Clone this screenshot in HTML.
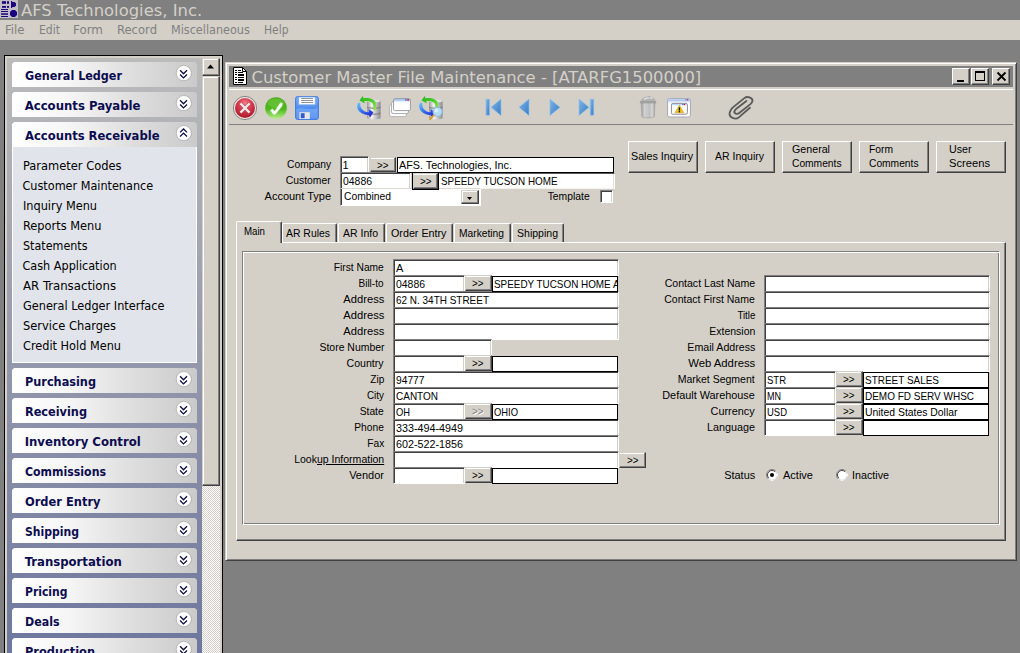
<!DOCTYPE html>
<html><head><meta charset="utf-8"><title>AFS Technologies, Inc.</title>
<style>
html,body{margin:0;padding:0}
body{width:1020px;height:653px;overflow:hidden;background:#808080;position:relative;font-family:"Liberation Sans",sans-serif;font-size:11px;color:#000}
.a{position:absolute;box-sizing:border-box}
.t{position:absolute;white-space:pre;z-index:2}
.sk{position:absolute;box-sizing:border-box;background:#fff;border:1px solid;border-color:#808080 #fff #fff #808080;box-shadow:inset 1px 1px 0 #404040,inset -1px 0 0 #d4d0c8}
.fl{position:absolute;z-index:1;box-sizing:border-box;background:#fff;border:1px solid #000}
.bt{position:absolute;box-sizing:border-box;background:#d4d0c8;border:1px solid;border-color:#fff #404040 #404040 #fff;box-shadow:inset -1px -1px 0 #808080}
.hd{position:absolute;box-sizing:border-box;left:12px;width:185px;height:25px;clip-path:polygon(2px 0,183px 0,185px 2px,185px 25px,0 25px,0 2px);background:linear-gradient(90deg,#ffffff 0%,#f6f6f6 30%,#dedede 65%,#cacaca 100%)}
.ch{position:absolute;left:164px;top:3px;width:16px;height:16px}
svg{position:absolute;overflow:visible}
</style></head><body>
<div class="a" style="left:0px;top:0px;width:1020px;height:20px;background:#808080"></div>
<svg style="left:0;top:0" width="18" height="18" viewBox="0 0 18 18"><rect x="0" y="0" width="18" height="18" fill="#c0c0c4"/>
<g fill="#1c0080"><rect x="2" y="1.2" width="4" height="2.6"/><rect x="7" y="1.2" width="2" height="2.6"/><rect x="2" y="6" width="4" height="1.8"/><rect x="7" y="6" width="2" height="1.8"/><rect x="1" y="9" width="7" height="1"/><rect x="1" y="11" width="7" height="1"/><rect x="1" y="13.3" width="7" height="1.5"/><rect x="1" y="16" width="7" height="1"/><path d="M11 1 h1.2 v1 h2.3 l1.5 1.2 v2.6 l-1.5 1.2 h-2.3 v1 h-1.2z"/><path d="M12 10 h3 l2 2 v3 l-2 2 h-3 l-2 -2 v-3z"/></g></svg>
<span class="t" style="top:1.00px;line-height:20px;font-family:'DejaVu Sans',sans-serif;font-size:16.4px;color:#d4d0c8;left:21px;">AFS Technologies, Inc.</span>
<div class="a" style="left:0px;top:20px;width:1020px;height:20px;background:#d4d0c8"></div>
<span class="t" style="top:22.00px;line-height:16px;font-family:'DejaVu Sans Condensed','DejaVu Sans',sans-serif;font-size:12.5px;color:#808080;left:4.5px;transform:scaleX(1.0409);transform-origin:0 0;">File</span>
<span class="t" style="top:22.00px;line-height:16px;font-family:'DejaVu Sans Condensed','DejaVu Sans',sans-serif;font-size:12.5px;color:#808080;left:38.5px;transform:scaleX(0.9641);transform-origin:0 0;">Edit</span>
<span class="t" style="top:22.00px;line-height:16px;font-family:'DejaVu Sans Condensed','DejaVu Sans',sans-serif;font-size:12.5px;color:#808080;left:73px;transform:scaleX(1.0614);transform-origin:0 0;">Form</span>
<span class="t" style="top:22.00px;line-height:16px;font-family:'DejaVu Sans Condensed','DejaVu Sans',sans-serif;font-size:12.5px;color:#808080;left:117px;transform:scaleX(1.0314);transform-origin:0 0;">Record</span>
<span class="t" style="top:22.00px;line-height:16px;font-family:'DejaVu Sans Condensed','DejaVu Sans',sans-serif;font-size:12.5px;color:#808080;left:171px;">Miscellaneous</span>
<span class="t" style="top:22.00px;line-height:16px;font-family:'DejaVu Sans Condensed','DejaVu Sans',sans-serif;font-size:12.5px;color:#808080;left:264px;transform:scaleX(0.9549);transform-origin:0 0;">Help</span>
<div class="a" style="left:4px;top:55px;width:219px;height:600px;background:#000"></div>
<div class="a" style="left:5px;top:56px;width:217px;height:600px;background:#d4d0c8"></div>
<div class="a" style="left:7px;top:58px;width:195px;height:600px;background:linear-gradient(180deg,#bbbbbb 0%,#6d769d 100%)"></div>
<div class="hd" style="top:62px"><svg class="ch" viewBox="0 0 16 16"><circle cx="8.1" cy="8.5" r="7.6" fill="#9a9aa2" opacity=".45"/><circle cx="7.8" cy="8.1" r="7.6" fill="#fff" stroke="#a6a6aa" stroke-width=".7"/><path d="M4.1 5.3 L7.5 8.8 L11 5.3 M4.1 9.5 L7.5 12.9 L11 9.5" fill="none" stroke="#0c0c44" stroke-width="1.3"/></svg></div>
<span class="t" style="top:67.00px;line-height:17px;font-family:'DejaVu Sans Condensed','DejaVu Sans',sans-serif;font-size:13px;font-weight:700;color:#0c0c50;left:24.7px;transform:scaleX(0.9568);transform-origin:0 0;">General Ledger</span>
<div class="hd" style="top:92px"><svg class="ch" viewBox="0 0 16 16"><circle cx="8.1" cy="8.5" r="7.6" fill="#9a9aa2" opacity=".45"/><circle cx="7.8" cy="8.1" r="7.6" fill="#fff" stroke="#a6a6aa" stroke-width=".7"/><path d="M4.1 5.3 L7.5 8.8 L11 5.3 M4.1 9.5 L7.5 12.9 L11 9.5" fill="none" stroke="#0c0c44" stroke-width="1.3"/></svg></div>
<span class="t" style="top:97.00px;line-height:17px;font-family:'DejaVu Sans Condensed','DejaVu Sans',sans-serif;font-size:13px;font-weight:700;color:#0c0c50;left:24.7px;">Accounts Payable</span>
<div class="hd" style="top:122px"><svg class="ch" viewBox="0 0 16 16"><circle cx="8.1" cy="8.5" r="7.6" fill="#9a9aa2" opacity=".45"/><circle cx="7.8" cy="8.1" r="7.6" fill="#fff" stroke="#a6a6aa" stroke-width=".7"/><path d="M4.1 7.4 L7.5 4 L11 7.4 M4.1 11.5 L7.5 8.1 L11 11.5" fill="none" stroke="#0c0c44" stroke-width="1.3"/></svg></div>
<span class="t" style="top:127.00px;line-height:17px;font-family:'DejaVu Sans Condensed','DejaVu Sans',sans-serif;font-size:13px;font-weight:700;color:#0c0c50;left:24.7px;transform:scaleX(0.9899);transform-origin:0 0;">Accounts Receivable</span>
<div class="hd" style="top:368px"><svg class="ch" viewBox="0 0 16 16"><circle cx="8.1" cy="8.5" r="7.6" fill="#9a9aa2" opacity=".45"/><circle cx="7.8" cy="8.1" r="7.6" fill="#fff" stroke="#a6a6aa" stroke-width=".7"/><path d="M4.1 5.3 L7.5 8.8 L11 5.3 M4.1 9.5 L7.5 12.9 L11 9.5" fill="none" stroke="#0c0c44" stroke-width="1.3"/></svg></div>
<span class="t" style="top:373.00px;line-height:17px;font-family:'DejaVu Sans Condensed','DejaVu Sans',sans-serif;font-size:13px;font-weight:700;color:#0c0c50;left:24.7px;transform:scaleX(0.9660);transform-origin:0 0;">Purchasing</span>
<div class="hd" style="top:398px"><svg class="ch" viewBox="0 0 16 16"><circle cx="8.1" cy="8.5" r="7.6" fill="#9a9aa2" opacity=".45"/><circle cx="7.8" cy="8.1" r="7.6" fill="#fff" stroke="#a6a6aa" stroke-width=".7"/><path d="M4.1 5.3 L7.5 8.8 L11 5.3 M4.1 9.5 L7.5 12.9 L11 9.5" fill="none" stroke="#0c0c44" stroke-width="1.3"/></svg></div>
<span class="t" style="top:403.00px;line-height:17px;font-family:'DejaVu Sans Condensed','DejaVu Sans',sans-serif;font-size:13px;font-weight:700;color:#0c0c50;left:24.7px;transform:scaleX(0.9664);transform-origin:0 0;">Receiving</span>
<div class="hd" style="top:428px"><svg class="ch" viewBox="0 0 16 16"><circle cx="8.1" cy="8.5" r="7.6" fill="#9a9aa2" opacity=".45"/><circle cx="7.8" cy="8.1" r="7.6" fill="#fff" stroke="#a6a6aa" stroke-width=".7"/><path d="M4.1 5.3 L7.5 8.8 L11 5.3 M4.1 9.5 L7.5 12.9 L11 9.5" fill="none" stroke="#0c0c44" stroke-width="1.3"/></svg></div>
<span class="t" style="top:433.00px;line-height:17px;font-family:'DejaVu Sans Condensed','DejaVu Sans',sans-serif;font-size:13px;font-weight:700;color:#0c0c50;left:24.7px;">Inventory Control</span>
<div class="hd" style="top:458px"><svg class="ch" viewBox="0 0 16 16"><circle cx="8.1" cy="8.5" r="7.6" fill="#9a9aa2" opacity=".45"/><circle cx="7.8" cy="8.1" r="7.6" fill="#fff" stroke="#a6a6aa" stroke-width=".7"/><path d="M4.1 5.3 L7.5 8.8 L11 5.3 M4.1 9.5 L7.5 12.9 L11 9.5" fill="none" stroke="#0c0c44" stroke-width="1.3"/></svg></div>
<span class="t" style="top:463.00px;line-height:17px;font-family:'DejaVu Sans Condensed','DejaVu Sans',sans-serif;font-size:13px;font-weight:700;color:#0c0c50;left:24.7px;transform:scaleX(0.9390);transform-origin:0 0;">Commissions</span>
<div class="hd" style="top:488px"><svg class="ch" viewBox="0 0 16 16"><circle cx="8.1" cy="8.5" r="7.6" fill="#9a9aa2" opacity=".45"/><circle cx="7.8" cy="8.1" r="7.6" fill="#fff" stroke="#a6a6aa" stroke-width=".7"/><path d="M4.1 5.3 L7.5 8.8 L11 5.3 M4.1 9.5 L7.5 12.9 L11 9.5" fill="none" stroke="#0c0c44" stroke-width="1.3"/></svg></div>
<span class="t" style="top:493.00px;line-height:17px;font-family:'DejaVu Sans Condensed','DejaVu Sans',sans-serif;font-size:13px;font-weight:700;color:#0c0c50;left:24.7px;transform:scaleX(0.9783);transform-origin:0 0;">Order Entry</span>
<div class="hd" style="top:518px"><svg class="ch" viewBox="0 0 16 16"><circle cx="8.1" cy="8.5" r="7.6" fill="#9a9aa2" opacity=".45"/><circle cx="7.8" cy="8.1" r="7.6" fill="#fff" stroke="#a6a6aa" stroke-width=".7"/><path d="M4.1 5.3 L7.5 8.8 L11 5.3 M4.1 9.5 L7.5 12.9 L11 9.5" fill="none" stroke="#0c0c44" stroke-width="1.3"/></svg></div>
<span class="t" style="top:523.00px;line-height:17px;font-family:'DejaVu Sans Condensed','DejaVu Sans',sans-serif;font-size:13px;font-weight:700;color:#0c0c50;left:24.7px;transform:scaleX(0.9275);transform-origin:0 0;">Shipping</span>
<div class="hd" style="top:548px"><svg class="ch" viewBox="0 0 16 16"><circle cx="8.1" cy="8.5" r="7.6" fill="#9a9aa2" opacity=".45"/><circle cx="7.8" cy="8.1" r="7.6" fill="#fff" stroke="#a6a6aa" stroke-width=".7"/><path d="M4.1 5.3 L7.5 8.8 L11 5.3 M4.1 9.5 L7.5 12.9 L11 9.5" fill="none" stroke="#0c0c44" stroke-width="1.3"/></svg></div>
<span class="t" style="top:553.00px;line-height:17px;font-family:'DejaVu Sans Condensed','DejaVu Sans',sans-serif;font-size:13px;font-weight:700;color:#0c0c50;left:24.7px;">Transportation</span>
<div class="hd" style="top:578px"><svg class="ch" viewBox="0 0 16 16"><circle cx="8.1" cy="8.5" r="7.6" fill="#9a9aa2" opacity=".45"/><circle cx="7.8" cy="8.1" r="7.6" fill="#fff" stroke="#a6a6aa" stroke-width=".7"/><path d="M4.1 5.3 L7.5 8.8 L11 5.3 M4.1 9.5 L7.5 12.9 L11 9.5" fill="none" stroke="#0c0c44" stroke-width="1.3"/></svg></div>
<span class="t" style="top:583.00px;line-height:17px;font-family:'DejaVu Sans Condensed','DejaVu Sans',sans-serif;font-size:13px;font-weight:700;color:#0c0c50;left:24.7px;transform:scaleX(0.9242);transform-origin:0 0;">Pricing</span>
<div class="hd" style="top:608px"><svg class="ch" viewBox="0 0 16 16"><circle cx="8.1" cy="8.5" r="7.6" fill="#9a9aa2" opacity=".45"/><circle cx="7.8" cy="8.1" r="7.6" fill="#fff" stroke="#a6a6aa" stroke-width=".7"/><path d="M4.1 5.3 L7.5 8.8 L11 5.3 M4.1 9.5 L7.5 12.9 L11 9.5" fill="none" stroke="#0c0c44" stroke-width="1.3"/></svg></div>
<span class="t" style="top:613.00px;line-height:17px;font-family:'DejaVu Sans Condensed','DejaVu Sans',sans-serif;font-size:13px;font-weight:700;color:#0c0c50;left:24.7px;transform:scaleX(0.9448);transform-origin:0 0;">Deals</span>
<div class="hd" style="top:638px"><svg class="ch" viewBox="0 0 16 16"><circle cx="8.1" cy="8.5" r="7.6" fill="#9a9aa2" opacity=".45"/><circle cx="7.8" cy="8.1" r="7.6" fill="#fff" stroke="#a6a6aa" stroke-width=".7"/><path d="M4.1 5.3 L7.5 8.8 L11 5.3 M4.1 9.5 L7.5 12.9 L11 9.5" fill="none" stroke="#0c0c44" stroke-width="1.3"/></svg></div>
<span class="t" style="top:643.00px;line-height:17px;font-family:'DejaVu Sans Condensed','DejaVu Sans',sans-serif;font-size:13px;font-weight:700;color:#0c0c50;left:24.7px;transform:scaleX(0.9724);transform-origin:0 0;">Production</span>
<div class="a" style="left:12px;top:147px;width:185px;height:216px;background:#e1e4ea;border:1px solid #fff;border-top:none"></div>
<span class="t" style="top:158.00px;line-height:16px;font-family:'DejaVu Sans Condensed','DejaVu Sans',sans-serif;font-size:12.5px;left:22.5px;transform:scaleX(1.0187);transform-origin:0 0;">Parameter Codes</span>
<span class="t" style="top:178.00px;line-height:16px;font-family:'DejaVu Sans Condensed','DejaVu Sans',sans-serif;font-size:12.5px;left:22.5px;">Customer Maintenance</span>
<span class="t" style="top:198.00px;line-height:16px;font-family:'DejaVu Sans Condensed','DejaVu Sans',sans-serif;font-size:12.5px;left:22.5px;transform:scaleX(1.0057);transform-origin:0 0;">Inquiry Menu</span>
<span class="t" style="top:218.00px;line-height:16px;font-family:'DejaVu Sans Condensed','DejaVu Sans',sans-serif;font-size:12.5px;left:22.5px;transform:scaleX(1.0123);transform-origin:0 0;">Reports Menu</span>
<span class="t" style="top:238.00px;line-height:16px;font-family:'DejaVu Sans Condensed','DejaVu Sans',sans-serif;font-size:12.5px;left:22.5px;transform:scaleX(0.9916);transform-origin:0 0;">Statements</span>
<span class="t" style="top:258.00px;line-height:16px;font-family:'DejaVu Sans Condensed','DejaVu Sans',sans-serif;font-size:12.5px;left:22.5px;">Cash Application</span>
<span class="t" style="top:278.00px;line-height:16px;font-family:'DejaVu Sans Condensed','DejaVu Sans',sans-serif;font-size:12.5px;left:22.5px;transform:scaleX(1.0440);transform-origin:0 0;">AR Transactions</span>
<span class="t" style="top:298.00px;line-height:16px;font-family:'DejaVu Sans Condensed','DejaVu Sans',sans-serif;font-size:12.5px;left:22.5px;transform:scaleX(1.0063);transform-origin:0 0;">General Ledger Interface</span>
<span class="t" style="top:318.00px;line-height:16px;font-family:'DejaVu Sans Condensed','DejaVu Sans',sans-serif;font-size:12.5px;left:22.5px;transform:scaleX(1.0181);transform-origin:0 0;">Service Charges</span>
<span class="t" style="top:338.00px;line-height:16px;font-family:'DejaVu Sans Condensed','DejaVu Sans',sans-serif;font-size:12.5px;left:22.5px;transform:scaleX(1.0058);transform-origin:0 0;">Credit Hold Menu</span>
<div class="a" style="left:202px;top:58px;width:18px;height:600px;background-color:#d4d0c8;background-image:linear-gradient(45deg,#fff 25%,transparent 25%,transparent 75%,#fff 75%),linear-gradient(45deg,#fff 25%,transparent 25%,transparent 75%,#fff 75%);background-size:2px 2px;background-position:0 0,1px 1px"></div>
<div class="bt" style="left:202px;top:58px;width:18px;height:18px;border-color:#d4d0c8 #404040 #404040 #d4d0c8;box-shadow:inset -1px -1px 0 #808080,inset 1px 1px 0 #fff"><svg style="left:4px;top:5px" width="8" height="5" viewBox="0 0 8 5"><path d="M0 4.5 L3.5 0.5 L7 4.5z" fill="#000"/></svg></div>
<div class="bt" style="left:202px;top:76px;width:18px;height:410px;border-color:#d4d0c8 #404040 #404040 #d4d0c8;box-shadow:inset -1px -1px 0 #808080,inset 1px 1px 0 #fff"></div>
<div class="a" style="left:225px;top:62px;width:792px;height:499px;background:#d4d0c8;border:1px solid;border-color:#d4d0c8 #404040 #404040 #d4d0c8;box-shadow:inset 1px 1px 0 #fff,inset -1px -1px 0 #808080"></div>
<div class="a" style="left:229px;top:66px;width:784px;height:21px;background:#808080"></div>
<svg style="left:233px;top:67px" width="14" height="18" viewBox="0 0 14 18"><path d="M0.5 0.5 H9.5 L13.5 4.5 V17.5 H0.5z" fill="#fff" stroke="#000"/><path d="M9.5 0.5 V4.5 H13.5" fill="none" stroke="#000"/><g fill="#000"><rect x="2" y="3" width="2" height="1"/><rect x="5" y="3" width="3" height="1"/><rect x="2" y="5" width="2" height="1"/><rect x="5" y="5" width="5" height="1"/><rect x="2" y="7" width="2" height="1"/><rect x="5" y="7" width="6" height="2"/><rect x="2" y="10" width="2" height="1"/><rect x="5" y="10" width="6" height="1"/><rect x="2" y="12" width="2" height="1"/><rect x="5" y="12" width="6" height="2"/><rect x="2" y="15" width="2" height="1"/><rect x="5" y="15" width="5" height="1"/></g></svg>
<span class="t" style="top:68.00px;line-height:20px;font-family:'DejaVu Sans',sans-serif;font-size:16.4px;color:#d4d0c8;left:251.5px;">Customer Master File Maintenance - [ATARFG1500000]</span>
<div class="bt" style="left:952px;top:68px;width:18px;height:17px;"><div class="a" style="left:4px;top:11px;width:7px;height:2px;background:#000"></div></div>
<div class="bt" style="left:971px;top:68px;width:18px;height:17px;"><div class="a" style="left:3px;top:2px;width:10px;height:10px;border:1px solid #000;border-top-width:2px"></div></div>
<div class="bt" style="left:992px;top:68px;width:18px;height:17px;"><svg style="left:4px;top:3px" width="9" height="9" viewBox="0 0 9 9"><path d="M0.5 0.5 L8.5 8.5 M8.5 0.5 L0.5 8.5" stroke="#000" stroke-width="1.8"/></svg></div>
<div class="a" style="left:229px;top:89px;width:784px;height:1px;background:#fff"></div>
<div class="a" style="left:229px;top:124px;width:784px;height:1px;background:#808080"></div>
<svg style="left:0;top:0" width="0" height="0"><defs>
<radialGradient id="gr" cx="50%" cy="30%" r="75%"><stop offset="0" stop-color="#ee8890"/><stop offset=".45" stop-color="#d63a4c"/><stop offset="1" stop-color="#a81428"/></radialGradient>
<linearGradient id="gg" x1="0" y1="0" x2="0" y2="1"><stop offset="0" stop-color="#48aa18"/><stop offset=".55" stop-color="#4cb81a"/><stop offset="1" stop-color="#b8ec8c"/></linearGradient>
<linearGradient id="gb" x1="0" y1="0" x2="0" y2="1"><stop offset="0" stop-color="#7fb0f4"/><stop offset=".5" stop-color="#4f8fee"/><stop offset="1" stop-color="#2f6fe0"/></linearGradient>
<linearGradient id="gn" x1="0" y1="0" x2="1" y2="1"><stop offset="0" stop-color="#7db4e6"/><stop offset="1" stop-color="#3a7cc4"/></linearGradient>
<linearGradient id="gc" x1="0" y1="0" x2="1" y2="0"><stop offset="0" stop-color="#9a9a9a"/><stop offset=".35" stop-color="#f4f4f4"/><stop offset="1" stop-color="#8c8c8c"/></linearGradient>
<linearGradient id="gw" x1="0" y1="0" x2="0" y2="1"><stop offset="0" stop-color="#a8c8f0"/><stop offset="1" stop-color="#ffffff"/></linearGradient>
<linearGradient id="gt" x1="0" y1="0" x2="1" y2="0"><stop offset="0" stop-color="#a6a6a6"/><stop offset=".3" stop-color="#d0d0d0"/><stop offset=".55" stop-color="#bababa"/><stop offset=".8" stop-color="#d2d2d2"/><stop offset="1" stop-color="#a6a6a6"/></linearGradient>
<linearGradient id="ga1" x1="0" y1="0" x2="1" y2="1"><stop offset="0" stop-color="#22b41c"/><stop offset=".5" stop-color="#48cc28"/><stop offset="1" stop-color="#98e858"/></linearGradient>
<linearGradient id="ga2" x1="0" y1="0" x2="1" y2="1"><stop offset="0" stop-color="#68d0ff"/><stop offset=".45" stop-color="#3070f0"/><stop offset="1" stop-color="#2418c8"/></linearGradient>
</defs></svg>
<!-- cancel -->
<svg style="left:233px;top:96px" width="24" height="24" viewBox="0 0 24 24"><circle cx="12" cy="12" r="11.6" fill="#ebe8e4" stroke="#6c6c6c" stroke-width=".8"/><circle cx="12" cy="12" r="10" fill="url(#gr)"/><path d="M7.4 7.4 L16.6 16.6 M16.6 7.4 L7.4 16.6" stroke="#b82a3a" stroke-width="3.6"/><path d="M7.4 7.4 L16.6 16.6 M16.6 7.4 L7.4 16.6" stroke="#ece8e8" stroke-width="2.5"/></svg>
<!-- ok -->
<svg style="left:265px;top:97px" width="22" height="22" viewBox="0 0 22 22"><circle cx="11" cy="11" r="10.8" fill="url(#gg)"/><ellipse cx="11" cy="6.2" rx="8.2" ry="4.8" fill="#9ae070" opacity=".3"/><path d="M5.2 13.4 L7.4 11.8 L9.7 14.2 L15.4 5.8 L17.4 6.2 L17 9.2 L10.2 17.6 L8.6 17.6 Z" fill="#fff" stroke="#d4e8c8" stroke-width=".5"/></svg>
<!-- save -->
<svg style="left:295px;top:96px" width="24" height="24" viewBox="0 0 24 24"><rect x=".6" y=".6" width="22.8" height="22.8" rx="2" fill="url(#gb)" stroke="#3c7ae6" stroke-width="1"/><path d="M1.2 13 C7 10.5 16 15 22.8 12 V22 C22.8 22.6 22.4 22.8 22 22.8 H2 C1.6 22.8 1.2 22.6 1.2 22z" fill="#8cb8fa" opacity=".55"/><rect x="3.8" y="1" width="16.4" height="7.8" fill="#fff" stroke="#7aa4ea" stroke-width=".7"/><path d="M6.2 2.5 H18 M6.2 4.5 H18 M6.2 6.5 H18" stroke="#85858c" stroke-width=".9"/><rect x="4.4" y="16.2" width="10.4" height="6.8" fill="#e6e6e8"/><rect x="5.8" y="17.2" width="3.8" height="5" fill="#2c5cd0"/></svg>
<!-- db refresh -->
<svg style="left:357px;top:96px" width="24" height="24" viewBox="0 0 24 24"><g><path d="M10 5 C10 3.4 23.6 3.4 23.6 5 V22 C23.6 23.8 10 23.8 10 22z" fill="url(#gc)"/>
<ellipse cx="16.8" cy="5" rx="6.8" ry="1.5" fill="#e2e2e2"/>
<path d="M10 11 C10 12.6 23.6 12.6 23.6 11 M10 17 C10 18.6 23.6 18.6 23.6 17" fill="none" stroke="#6e6e6e" stroke-width=".9"/>
<path d="M2.6 4.6 L5.6 0.1 L6.6 2.4 C12 1 19.5 3.5 19.2 9 L18.6 14.5 L16.4 14 L16.4 9.5 C16.2 6.5 12 4.6 7.2 5.2 L7.8 7.4 Z" fill="url(#ga1)"/>
<path d="M1 6.4 C-0.5 9 -0.2 13 2.4 15.6 C5 18.2 8 19 11.6 18.9 L13.2 21.2 L16.4 16.3 L11.4 13.1 L11.8 16.2 C9 16.4 6 15.2 4.4 12.6 C3.2 10.6 3 9 3.4 7.3 Z" fill="url(#ga2)"/></g></svg>
<!-- windows -->
<svg style="left:389px;top:98px" width="23" height="20" viewBox="0 0 23 20"><rect x=".6" y="6.6" width="16.8" height="12" rx="1.6" fill="#fff" stroke="#b4b4b4" stroke-width="1"/><rect x="2.6" y="3.6" width="16.8" height="12" rx="1.6" fill="#fff" stroke="#a8a8a8" stroke-width="1"/><rect x="4.6" y=".6" width="16.8" height="12" rx="1.6" fill="url(#gw)" stroke="#9c9ca4" stroke-width="1"/><rect x="5.2" y="3.4" width="15.6" height="8.6" fill="#fff"/><rect x="16" y="1.2" width="1.8" height="1.4" fill="#3a78d8"/><rect x="18.2" y="1.2" width="1.8" height="1.4" fill="#e01020"/></svg>
<!-- db search -->
<svg style="left:419px;top:96px" width="24" height="24" viewBox="0 0 24 24"><g><path d="M10 5 C10 3.4 23.6 3.4 23.6 5 V22 C23.6 23.8 10 23.8 10 22z" fill="url(#gc)"/>
<ellipse cx="16.8" cy="5" rx="6.8" ry="1.5" fill="#e2e2e2"/>
<path d="M10 11 C10 12.6 23.6 12.6 23.6 11 M10 17 C10 18.6 23.6 18.6 23.6 17" fill="none" stroke="#6e6e6e" stroke-width=".9"/>
<path d="M2.6 4.6 L5.6 0.1 L6.6 2.4 C12 1 19.5 3.5 19.2 9 L18.6 14.5 L16.4 14 L16.4 9.5 C16.2 6.5 12 4.6 7.2 5.2 L7.8 7.4 Z" fill="url(#ga1)"/>
<path d="M1 6.4 C-0.5 9 -0.2 13 2.4 15.6 C5 18.2 8 19 11.6 18.9 L13.2 21.2 L16.4 16.3 L11.4 13.1 L11.8 16.2 C9 16.4 6 15.2 4.4 12.6 C3.2 10.6 3 9 3.4 7.3 Z" fill="url(#ga2)"/></g><path d="M11 23.4 L15.4 18.6" stroke="#e09a20" stroke-width="1.8" stroke-linecap="round"/><circle cx="18.6" cy="15.8" r="4.6" fill="#b4dcf8" stroke="#88b8e0" stroke-width="1"/><circle cx="17.4" cy="14.4" r="2" fill="#e4f4ff" opacity=".8"/></svg>
<!-- nav -->
<svg style="left:485px;top:98px" width="110" height="19" viewBox="0 0 110 19"><g fill="url(#gn)" stroke="#8cc0ee" stroke-width=".7">
<rect x="1" y="1.2" width="3.6" height="16"/><path d="M16 1 V17.6 L6 9.3z"/>
<path d="M44 1 V17.6 L34 9.3z"/>
<path d="M65 1 V17.6 L75 9.3z"/>
<path d="M94 1 V17.6 L104 9.3z"/><rect x="105.2" y="1.2" width="3.6" height="16"/></g></svg>
<!-- trash -->
<svg style="left:639px;top:95px" width="18" height="24" viewBox="0 0 18 24"><path d="M2.1 7 H16 L15.4 21.6 C15.3 23.3 2.9 23.3 2.8 21.6z" fill="url(#gt)" stroke="#949494" stroke-width=".5"/><path d="M5.6 9 V21.6 M9 9 V22 M12.4 9 V21.6" stroke="#d8d8d8" stroke-width="1" opacity=".7"/><path d="M1.8 6.8 C2.4 4 5 2.6 9.8 1.6 C14 2.4 16 4 16.4 6.6z" fill="#b4b4b4" stroke="#9c9c9c" stroke-width=".5"/><path d="M5 4.4 C7 3 11 2.4 13.6 3.4" stroke="#e8e8e8" stroke-width="1.2" fill="none"/><rect x="8.6" y=".9" width="2.6" height="1.5" rx=".6" fill="#b0b0b0"/><rect x="1.1" y="6.6" width="16" height="1.5" rx=".7" fill="#a8a8a8" stroke="#8c8c8c" stroke-width=".4"/></svg>
<!-- warning window -->
<svg style="left:667px;top:98px" width="24" height="20" viewBox="0 0 24 20"><rect x=".6" y=".6" width="22.8" height="18.4" rx="1.6" fill="#fff" stroke="#a4a8b4" stroke-width="1"/><rect x="1.2" y="1.2" width="21.6" height="2.4" fill="#b0c8ee"/><rect x="1.2" y="3.6" width="21.6" height="1" fill="#dce8f8"/><rect x="18.4" y="1.3" width="1.2" height="1" fill="#3a78d8"/><rect x="19.9" y="1.3" width="1.4" height="1.1" fill="#e80020"/><rect x="4.4" y="5.4" width="16" height="10.8" rx="1.4" fill="#fff" stroke="#8c8c94" stroke-width="1"/><rect x="5" y="6" width="14.8" height="1.3" fill="#c0d4f4"/><rect x="15.2" y="6" width="1.2" height="1" fill="#3a78d8"/><rect x="16.8" y="6" width="1.3" height="1.1" fill="#e80020"/><path d="M12.4 7.2 L16.9 14.8 H7.9z" fill="#f0c418" stroke="#c4980c" stroke-width=".5"/><path d="M12.4 9.4 V12.5" stroke="#000" stroke-width="1.4"/><rect x="11.7" y="13.1" width="1.4" height="1.2" fill="#000"/></svg>
<!-- paperclip -->
<svg style="left:729px;top:96px" width="24" height="24" viewBox="0 0 24 24"><path d="M20.9 11.7 L9.8 21.4 C6.2 24.4 -0.8 21.2 0.8 16.2 C1.4 14.2 2.2 13 3.6 11.6 L15.4 2.1 C18.6 -0.4 24.6 2 23.3 5.6 C23 6.6 22.4 7.2 21.4 8.1 L10.2 17 C7.6 19 4.4 17.2 5.7 14.6 C6 14 6.4 13.6 7 13.1 L17.4 4.9" fill="none" stroke="#5a5a5a" stroke-width="1.85" stroke-linecap="round" stroke-linejoin="round"/></svg>

<span class="t" style="top:157.00px;line-height:15px;right:689px;transform:scaleX(0.9346);transform-origin:100% 0;">Company</span>
<span class="t" style="top:173.00px;line-height:15px;right:689px;transform:scaleX(0.9436);transform-origin:100% 0;">Customer</span>
<span class="t" style="top:189.00px;line-height:15px;right:689px;">Account Type</span>
<div class="sk" style="left:340px;top:156px;width:29px;height:17px;"></div>
<span class="t" style="top:158.00px;line-height:15px;left:342.5px;">1</span>
<div class="bt" style="left:370px;top:157px;width:26px;height:15px;border-color:#d4d0c8 #404040 #404040 #d4d0c8;box-shadow:inset -1px -1px 0 #808080,inset 0 1px 0 #fff"></div>
<span class="t" style="top:158.50px;line-height:14px;font-size:10px;left:376.5px;transform:scaleX(0.9840);transform-origin:0 0;">&gt;&gt;</span>
<div class="fl" style="left:397px;top:157px;width:217px;height:16px;"></div>
<span class="t" style="top:158.00px;line-height:15px;left:399px;transform:scaleX(0.9794);transform-origin:0 0;">AFS. Technologies, Inc.</span>
<div class="sk" style="left:340px;top:172px;width:71px;height:17px;"></div>
<span class="t" style="top:174.00px;line-height:15px;left:342.5px;transform:scaleX(0.9479);transform-origin:0 0;">04886</span>
<div class="a" style="left:412px;top:172px;width:27px;height:18px;background:#000;z-index:1"></div>
<div class="bt" style="left:413px;top:173px;width:25px;height:16px;border-color:#d4d0c8 #404040 #404040 #d4d0c8;box-shadow:inset -1px -1px 0 #808080,inset 0 1px 0 #fff;z-index:1"></div>
<span class="t" style="top:174.50px;line-height:14px;font-size:10px;left:419.5px;transform:scaleX(0.9840);transform-origin:0 0;">&gt;&gt;</span>
<div class="a" style="left:439px;top:173px;width:176px;height:16px;background:#fff;border:1px solid;border-color:#585858 #fff #f4f2ee #fff;box-shadow:inset -1px 0 0 #e4e0d8"></div>
<span class="t" style="top:174.00px;line-height:15px;left:441px;transform:scaleX(0.8976);transform-origin:0 0;">SPEEDY TUCSON HOME</span>
<div class="a" style="left:340px;top:188px;width:141px;height:18px;background:#fff;border:1px solid;border-color:#dcd8d0 #fff #fff #808080;box-shadow:inset 1px 0 0 #404040"></div>
<span class="t" style="top:189.00px;line-height:15px;left:344px;transform:scaleX(0.9374);transform-origin:0 0;">Combined</span>
<div class="bt" style="left:461px;top:190px;width:18px;height:14px;border-color:#d4d0c8 #404040 #404040 #d4d0c8;box-shadow:inset -1px -1px 0 #808080,inset 1px 1px 0 #fff"><svg style="left:5px;top:6px" width="5" height="3" viewBox="0 0 5 3"><path d="M0 0 H5 L2.5 3z" fill="#000"/></svg></div>
<span class="t" style="top:189.00px;line-height:15px;right:430px;transform:scaleX(0.9408);transform-origin:100% 0;">Template</span>
<div class="sk" style="left:600px;top:190px;width:13px;height:13px;"></div>
<div class="bt" style="left:628px;top:141px;width:70px;height:32px;box-shadow:inset -1px -1px 0 #808080,inset 1px 1px 0 #d4d0c8"></div>
<span class="t" style="top:149.00px;line-height:15px;left:631px;transform:scaleX(0.9749);transform-origin:0 0;">Sales Inquiry</span>
<div class="bt" style="left:705px;top:141px;width:70px;height:32px;box-shadow:inset -1px -1px 0 #808080,inset 1px 1px 0 #d4d0c8"></div>
<span class="t" style="top:149.00px;line-height:15px;left:715px;transform:scaleX(0.9541);transform-origin:0 0;">AR Inquiry</span>
<div class="bt" style="left:782px;top:141px;width:70px;height:32px;box-shadow:inset -1px -1px 0 #808080,inset 1px 1px 0 #d4d0c8"></div>
<span class="t" style="top:142.00px;line-height:15px;left:791.5px;transform:scaleX(0.9709);transform-origin:0 0;">General</span>
<span class="t" style="top:156.00px;line-height:15px;left:791.5px;transform:scaleX(0.9307);transform-origin:0 0;">Comments</span>
<div class="bt" style="left:859px;top:141px;width:70px;height:32px;box-shadow:inset -1px -1px 0 #808080,inset 1px 1px 0 #d4d0c8"></div>
<span class="t" style="top:142.00px;line-height:15px;left:868.5px;transform:scaleX(0.9349);transform-origin:0 0;">Form</span>
<span class="t" style="top:156.00px;line-height:15px;left:868.5px;transform:scaleX(0.9307);transform-origin:0 0;">Comments</span>
<div class="bt" style="left:936px;top:141px;width:70px;height:32px;box-shadow:inset -1px -1px 0 #808080,inset 1px 1px 0 #d4d0c8"></div>
<span class="t" style="top:142.00px;line-height:15px;left:949px;transform:scaleX(0.9684);transform-origin:0 0;">User</span>
<span class="t" style="top:156.00px;line-height:15px;left:949px;transform:scaleX(1.0159);transform-origin:0 0;">Screens</span>
<div class="a" style="left:236px;top:242px;width:770px;height:299px;background:#d4d0c8;border:1px solid;border-color:#fff #404040 #404040 #fff;box-shadow:inset -1px -1px 0 #808080"></div>
<div class="a" style="left:282px;top:223px;width:55px;height:19px;background:#d4d0c8;border:1px solid;border-bottom:none;border-color:#fff #404040 #404040 #fff;border-radius:2px 2px 0 0;box-shadow:inset -1px 0 0 #808080"></div>
<span class="t" style="top:226.00px;line-height:15px;left:286px;transform:scaleX(0.9469);transform-origin:0 0;">AR Rules</span>
<div class="a" style="left:338px;top:223px;width:47px;height:19px;background:#d4d0c8;border:1px solid;border-bottom:none;border-color:#fff #404040 #404040 #fff;border-radius:2px 2px 0 0;box-shadow:inset -1px 0 0 #808080"></div>
<span class="t" style="top:226.00px;line-height:15px;left:343px;transform:scaleX(0.9540);transform-origin:0 0;">AR Info</span>
<div class="a" style="left:386px;top:223px;width:67px;height:19px;background:#d4d0c8;border:1px solid;border-bottom:none;border-color:#fff #404040 #404040 #fff;border-radius:2px 2px 0 0;box-shadow:inset -1px 0 0 #808080"></div>
<span class="t" style="top:226.00px;line-height:15px;left:390.5px;transform:scaleX(0.9761);transform-origin:0 0;">Order Entry</span>
<div class="a" style="left:454px;top:223px;width:57px;height:19px;background:#d4d0c8;border:1px solid;border-bottom:none;border-color:#fff #404040 #404040 #fff;border-radius:2px 2px 0 0;box-shadow:inset -1px 0 0 #808080"></div>
<span class="t" style="top:226.00px;line-height:15px;left:459px;transform:scaleX(0.9317);transform-origin:0 0;">Marketing</span>
<div class="a" style="left:512px;top:223px;width:52px;height:19px;background:#d4d0c8;border:1px solid;border-bottom:none;border-color:#fff #404040 #404040 #fff;border-radius:2px 2px 0 0;box-shadow:inset -1px 0 0 #808080"></div>
<span class="t" style="top:226.00px;line-height:15px;left:516.5px;transform:scaleX(0.9573);transform-origin:0 0;">Shipping</span>
<div class="a" style="left:236px;top:221px;width:46px;height:22px;background:#d4d0c8;border:1px solid;border-bottom:none;border-color:#fff #404040 #404040 #fff;border-radius:2px 2px 0 0;box-shadow:inset -1px 0 0 #808080"></div>
<span class="t" style="top:224.00px;line-height:15px;left:244px;transform:scaleX(0.8807);transform-origin:0 0;">Main</span>
<div class="a" style="left:242px;top:251px;width:758px;height:274px;border:1px solid;border-color:#808080 #fff #fff #808080;box-shadow:inset 1px 1px 0 #fff,inset -1px -1px 0 #808080"></div>
<span class="t" style="top:260.00px;line-height:15px;right:636px;transform:scaleX(0.9297);transform-origin:100% 0;">First Name</span>
<span class="t" style="top:276.00px;line-height:15px;right:636px;transform:scaleX(0.9086);transform-origin:100% 0;">Bill-to</span>
<span class="t" style="top:292.00px;line-height:15px;right:636px;transform:scaleX(1.0159);transform-origin:100% 0;">Address</span>
<span class="t" style="top:308.00px;line-height:15px;right:636px;transform:scaleX(1.0159);transform-origin:100% 0;">Address</span>
<span class="t" style="top:324.00px;line-height:15px;right:636px;transform:scaleX(1.0159);transform-origin:100% 0;">Address</span>
<span class="t" style="top:340.00px;line-height:15px;right:636px;transform:scaleX(0.9491);transform-origin:100% 0;">Store Number</span>
<span class="t" style="top:356.00px;line-height:15px;right:636px;transform:scaleX(0.9603);transform-origin:100% 0;">Country</span>
<span class="t" style="top:372.00px;line-height:15px;right:636px;transform:scaleX(0.9162);transform-origin:100% 0;">Zip</span>
<span class="t" style="top:388.00px;line-height:15px;right:636px;transform:scaleX(0.8969);transform-origin:100% 0;">City</span>
<span class="t" style="top:404.00px;line-height:15px;right:636px;transform:scaleX(0.9343);transform-origin:100% 0;">State</span>
<span class="t" style="top:420.00px;line-height:15px;right:636px;transform:scaleX(0.9273);transform-origin:100% 0;">Phone</span>
<span class="t" style="top:436.00px;line-height:15px;right:636px;transform:scaleX(0.9267);transform-origin:100% 0;">Fax</span>
<span class="t" style="top:452.00px;line-height:15px;right:636px;transform:scaleX(0.9557);transform-origin:100% 0;">Look<u>up Information</u></span>
<span class="t" style="top:468.00px;line-height:15px;right:636px;">Vendor</span>
<div class="sk" style="left:393px;top:259px;width:226px;height:17px;"></div>
<span class="t" style="top:261.00px;line-height:15px;left:396px;">A</span>
<div class="sk" style="left:393px;top:275px;width:72px;height:17px;"></div>
<span class="t" style="top:277.00px;line-height:15px;left:396px;transform:scaleX(0.9479);transform-origin:0 0;">04886</span>
<div class="bt" style="left:465px;top:275px;width:27px;height:16px;border-color:#d4d0c8 #404040 #404040 #d4d0c8;box-shadow:inset -1px -1px 0 #808080,inset 0 1px 0 #fff"></div>
<span class="t" style="top:276.50px;line-height:14px;font-size:10px;left:472px;transform:scaleX(0.9840);transform-origin:0 0;">&gt;&gt;</span>
<div class="fl" style="left:492px;top:276px;width:126px;height:16px;"></div>
<div class="sk" style="left:393px;top:291px;width:226px;height:17px;"></div>
<span class="t" style="top:293.00px;line-height:15px;left:396px;transform:scaleX(0.9055);transform-origin:0 0;">62 N. 34TH STREET</span>
<div class="sk" style="left:393px;top:307px;width:226px;height:17px;"></div>
<div class="sk" style="left:393px;top:323px;width:226px;height:17px;"></div>
<div class="sk" style="left:393px;top:339px;width:99px;height:17px;"></div>
<div class="sk" style="left:393px;top:355px;width:72px;height:17px;"></div>
<div class="bt" style="left:465px;top:355px;width:27px;height:16px;border-color:#d4d0c8 #404040 #404040 #d4d0c8;box-shadow:inset -1px -1px 0 #808080,inset 0 1px 0 #fff"></div>
<span class="t" style="top:356.50px;line-height:14px;font-size:10px;left:472px;transform:scaleX(0.9840);transform-origin:0 0;">&gt;&gt;</span>
<div class="fl" style="left:492px;top:356px;width:126px;height:16px;"></div>
<div class="sk" style="left:393px;top:371px;width:226px;height:17px;"></div>
<span class="t" style="top:373.00px;line-height:15px;left:396px;transform:scaleX(0.9316);transform-origin:0 0;">94777</span>
<div class="sk" style="left:393px;top:387px;width:226px;height:17px;"></div>
<span class="t" style="top:389.00px;line-height:15px;left:396px;transform:scaleX(0.9081);transform-origin:0 0;">CANTON</span>
<div class="sk" style="left:393px;top:403px;width:72px;height:17px;"></div>
<span class="t" style="top:405.00px;line-height:15px;left:396px;transform:scaleX(0.8485);transform-origin:0 0;">OH</span>
<div class="bt" style="left:465px;top:403px;width:27px;height:16px;border-color:#d4d0c8 #404040 #404040 #d4d0c8;box-shadow:inset -1px -1px 0 #808080,inset 0 1px 0 #fff"></div>
<span class="t" style="top:405.50px;line-height:14px;font-size:10px;color:#fff;left:473px;transform:scaleX(0.9840);transform-origin:0 0;">&gt;&gt;</span>
<span class="t" style="top:404.50px;line-height:14px;font-size:10px;color:#808080;left:472px;transform:scaleX(0.9840);transform-origin:0 0;">&gt;&gt;</span>
<div class="fl" style="left:492px;top:404px;width:126px;height:16px;"></div>
<span class="t" style="top:405.00px;line-height:15px;left:494px;transform:scaleX(0.8533);transform-origin:0 0;">OHIO</span>
<div class="sk" style="left:393px;top:419px;width:226px;height:17px;"></div>
<span class="t" style="top:421.00px;line-height:15px;left:396px;transform:scaleX(0.9779);transform-origin:0 0;">333-494-4949</span>
<div class="sk" style="left:393px;top:435px;width:226px;height:17px;"></div>
<span class="t" style="top:437.00px;line-height:15px;left:396px;transform:scaleX(0.9779);transform-origin:0 0;">602-522-1856</span>
<div class="sk" style="left:393px;top:451px;width:226px;height:17px;"></div>
<div class="bt" style="left:619px;top:452px;width:27px;height:16px;border-color:#d4d0c8 #404040 #404040 #d4d0c8;box-shadow:inset -1px -1px 0 #808080,inset 0 1px 0 #fff"></div>
<span class="t" style="top:453.50px;line-height:14px;font-size:10px;left:626.5px;transform:scaleX(0.9840);transform-origin:0 0;">&gt;&gt;</span>
<div class="sk" style="left:393px;top:467px;width:72px;height:17px;"></div>
<div class="bt" style="left:465px;top:467px;width:27px;height:16px;border-color:#d4d0c8 #404040 #404040 #d4d0c8;box-shadow:inset -1px -1px 0 #808080,inset 0 1px 0 #fff"></div>
<span class="t" style="top:468.50px;line-height:14px;font-size:10px;left:472px;transform:scaleX(0.9840);transform-origin:0 0;">&gt;&gt;</span>
<div class="fl" style="left:492px;top:468px;width:126px;height:16px;"></div>
<div class="a" style="left:493px;top:277px;width:124px;height:13px;overflow:hidden;z-index:2">
<span class="t" style="top:0.00px;line-height:15px;left:1px;transform:scaleX(0.8991);transform-origin:0 0;">SPEEDY TUCSON HOME A</span>
</div>
<span class="t" style="top:276.00px;line-height:15px;right:265px;transform:scaleX(0.9612);transform-origin:100% 0;">Contact Last Name</span>
<div class="sk" style="left:764px;top:275px;width:226px;height:17px;"></div>
<span class="t" style="top:292.00px;line-height:15px;right:265px;transform:scaleX(0.9551);transform-origin:100% 0;">Contact First Name</span>
<div class="sk" style="left:764px;top:291px;width:226px;height:17px;"></div>
<span class="t" style="top:308.00px;line-height:15px;right:265px;transform:scaleX(0.8834);transform-origin:100% 0;">Title</span>
<div class="sk" style="left:764px;top:307px;width:226px;height:17px;"></div>
<span class="t" style="top:324.00px;line-height:15px;right:265px;transform:scaleX(0.9521);transform-origin:100% 0;">Extension</span>
<div class="sk" style="left:764px;top:323px;width:226px;height:17px;"></div>
<span class="t" style="top:340.00px;line-height:15px;right:265px;transform:scaleX(0.9671);transform-origin:100% 0;">Email Address</span>
<div class="sk" style="left:764px;top:339px;width:226px;height:17px;"></div>
<span class="t" style="top:356.00px;line-height:15px;right:265px;transform:scaleX(1.0271);transform-origin:100% 0;">Web Address</span>
<div class="sk" style="left:764px;top:355px;width:226px;height:17px;"></div>
<span class="t" style="top:372.00px;line-height:15px;right:265px;transform:scaleX(0.9541);transform-origin:100% 0;">Market Segment</span>
<span class="t" style="top:388.00px;line-height:15px;right:265px;transform:scaleX(0.9865);transform-origin:100% 0;">Default Warehouse</span>
<span class="t" style="top:404.00px;line-height:15px;right:265px;transform:scaleX(0.9860);transform-origin:100% 0;">Currency</span>
<span class="t" style="top:420.00px;line-height:15px;right:265px;transform:scaleX(0.9805);transform-origin:100% 0;">Language</span>
<div class="sk" style="left:764px;top:371px;width:72px;height:17px;"></div>
<span class="t" style="top:373.00px;line-height:15px;left:767px;transform:scaleX(0.8636);transform-origin:0 0;">STR</span>
<div class="bt" style="left:836px;top:371px;width:27px;height:16px;border-color:#d4d0c8 #404040 #404040 #d4d0c8;box-shadow:inset -1px -1px 0 #808080,inset 0 1px 0 #fff"></div>
<span class="t" style="top:372.50px;line-height:14px;font-size:10px;left:843px;transform:scaleX(0.9840);transform-origin:0 0;">&gt;&gt;</span>
<div class="fl" style="left:863px;top:372px;width:126px;height:16px;"></div>
<span class="t" style="top:373.00px;line-height:15px;left:865px;transform:scaleX(0.9055);transform-origin:0 0;">STREET SALES</span>
<div class="sk" style="left:764px;top:387px;width:72px;height:17px;"></div>
<span class="t" style="top:389.00px;line-height:15px;left:767px;transform:scaleX(0.8183);transform-origin:0 0;">MN</span>
<div class="bt" style="left:836px;top:387px;width:27px;height:16px;border-color:#d4d0c8 #404040 #404040 #d4d0c8;box-shadow:inset -1px -1px 0 #808080,inset 0 1px 0 #fff"></div>
<span class="t" style="top:388.50px;line-height:14px;font-size:10px;left:843px;transform:scaleX(0.9840);transform-origin:0 0;">&gt;&gt;</span>
<div class="fl" style="left:863px;top:388px;width:126px;height:16px;"></div>
<span class="t" style="top:389.00px;line-height:15px;left:865px;transform:scaleX(0.9068);transform-origin:0 0;">DEMO FD SERV WHSC</span>
<div class="sk" style="left:764px;top:403px;width:72px;height:17px;"></div>
<span class="t" style="top:405.00px;line-height:15px;left:767px;transform:scaleX(0.8608);transform-origin:0 0;">USD</span>
<div class="bt" style="left:836px;top:403px;width:27px;height:16px;border-color:#d4d0c8 #404040 #404040 #d4d0c8;box-shadow:inset -1px -1px 0 #808080,inset 0 1px 0 #fff"></div>
<span class="t" style="top:404.50px;line-height:14px;font-size:10px;left:843px;transform:scaleX(0.9840);transform-origin:0 0;">&gt;&gt;</span>
<div class="fl" style="left:863px;top:404px;width:126px;height:16px;"></div>
<span class="t" style="top:405.00px;line-height:15px;left:865px;transform:scaleX(0.9455);transform-origin:0 0;">United States Dollar</span>
<div class="sk" style="left:764px;top:419px;width:72px;height:17px;"></div>
<div class="bt" style="left:836px;top:419px;width:27px;height:16px;border-color:#d4d0c8 #404040 #404040 #d4d0c8;box-shadow:inset -1px -1px 0 #808080,inset 0 1px 0 #fff"></div>
<span class="t" style="top:420.50px;line-height:14px;font-size:10px;left:843px;transform:scaleX(0.9840);transform-origin:0 0;">&gt;&gt;</span>
<div class="fl" style="left:863px;top:420px;width:126px;height:16px;"></div>
<span class="t" style="top:468.00px;line-height:15px;right:265px;transform:scaleX(0.9940);transform-origin:100% 0;">Status</span>
<svg style="left:766px;top:469px" width="12" height="12" viewBox="0 0 12 12"><circle cx="6" cy="6" r="5.5" fill="#fff" stroke="#808080"/><path d="M2.1 9.9 A5.5 5.5 0 0 0 9.9 2.1" fill="none" stroke="#fff" stroke-width="1"/><path d="M2.8 9.2 A4.5 4.5 0 0 1 9.2 2.8" fill="none" stroke="#404040" stroke-width="1"/><circle cx="6" cy="6" r="2" fill="#000"/></svg>
<span class="t" style="top:468.00px;line-height:15px;left:783px;">Active</span>
<svg style="left:836px;top:469px" width="12" height="12" viewBox="0 0 12 12"><circle cx="6" cy="6" r="5.5" fill="#fff" stroke="#808080"/><path d="M2.1 9.9 A5.5 5.5 0 0 0 9.9 2.1" fill="none" stroke="#fff" stroke-width="1"/><path d="M2.8 9.2 A4.5 4.5 0 0 1 9.2 2.8" fill="none" stroke="#404040" stroke-width="1"/></svg>
<span class="t" style="top:468.00px;line-height:15px;left:852px;transform:scaleX(0.9757);transform-origin:0 0;">Inactive</span>
</body></html>
